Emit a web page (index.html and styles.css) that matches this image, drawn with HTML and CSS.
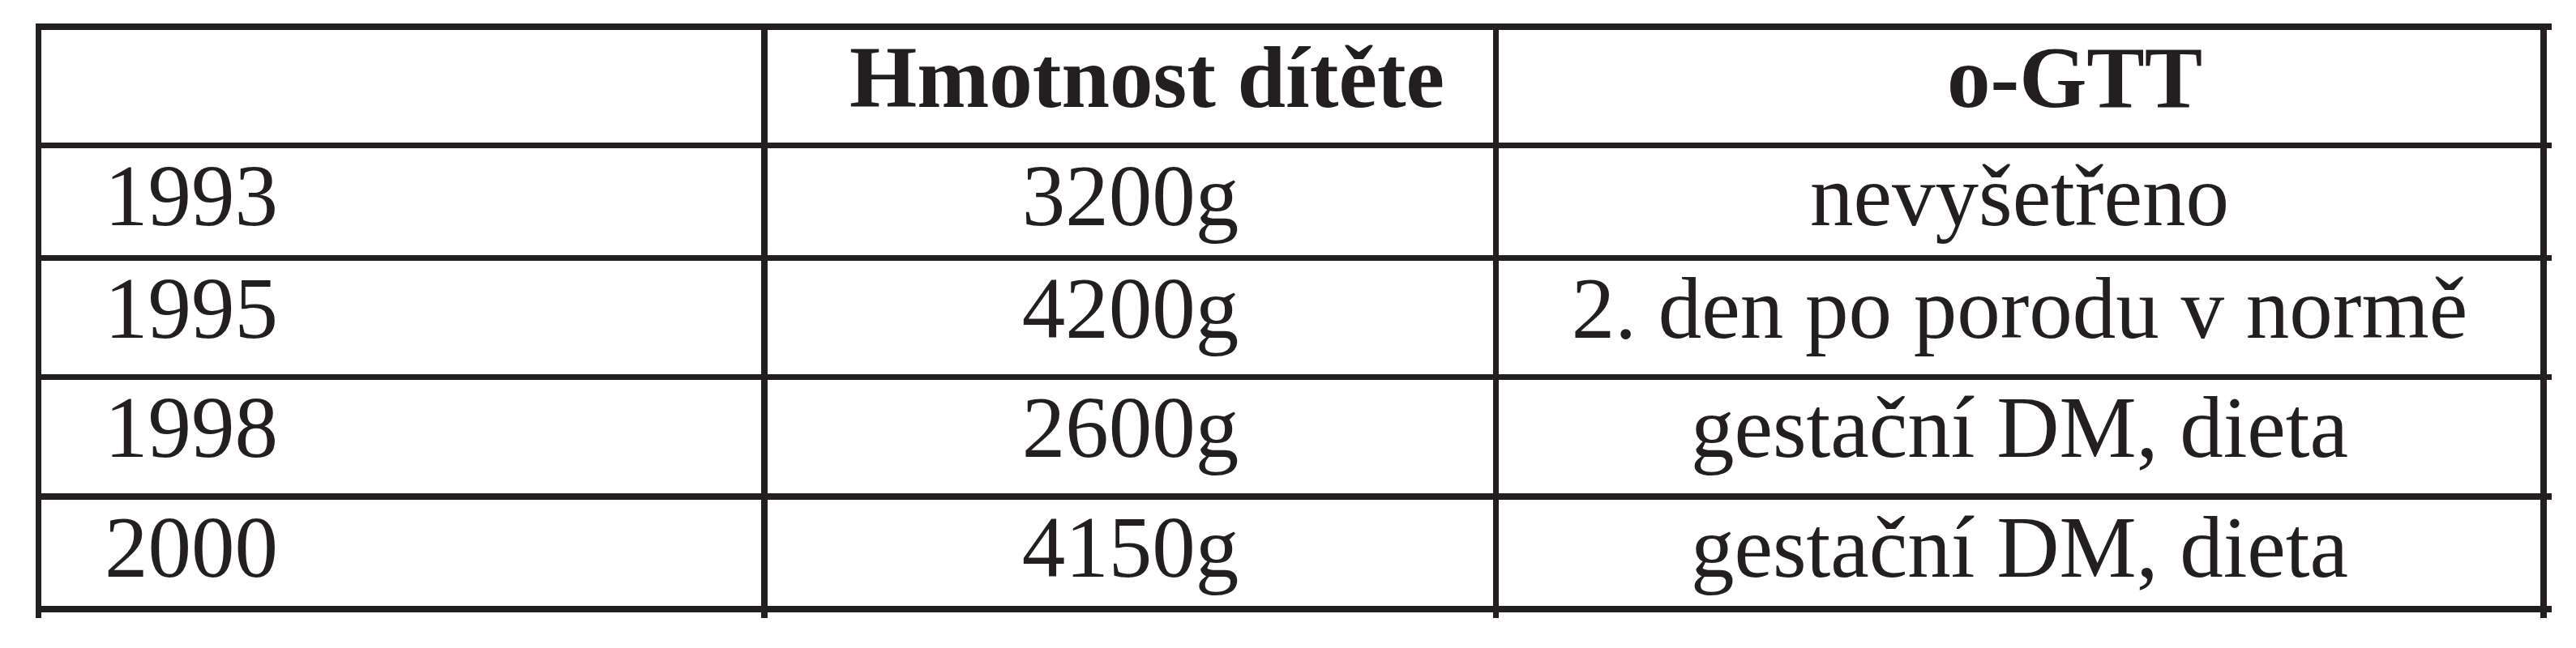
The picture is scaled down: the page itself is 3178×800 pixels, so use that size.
FILE: index.html
```html
<!DOCTYPE html>
<html lang="cs">
<head>
<meta charset="utf-8">
<title>Tabulka</title>
<link rel="stylesheet" href="styles.css">
</head>
<body>
<table class="data">
  <tr class="row-head">
    <td class="c1"></td>
    <th class="c2 head-2">Hmotnost dítěte</th>
    <th class="c3 head-3">o-GTT</th>
    <td class="c4"></td>
  </tr>
  <tr class="row-a">
    <td class="c1 year">1993</td>
    <td class="c2 val">3200g</td>
    <td class="c3 val">nevyšetřeno</td>
    <td class="c4"></td>
  </tr>
  <tr class="row-b">
    <td class="c1 year">1995</td>
    <td class="c2 val">4200g</td>
    <td class="c3 val">2. den po porodu v normě</td>
    <td class="c4"></td>
  </tr>
  <tr class="row-b">
    <td class="c1 year">1998</td>
    <td class="c2 val">2600g</td>
    <td class="c3 val">gestační DM, dieta</td>
    <td class="c4"></td>
  </tr>
  <tr class="row-last">
    <td class="c1 year">2000</td>
    <td class="c2 val">4150g</td>
    <td class="c3 val">gestační DM, dieta</td>
    <td class="c4"></td>
  </tr>
  <tr class="row-tail">
    <td class="c1"></td>
    <td class="c2"></td>
    <td class="c3"></td>
    <td class="c4"></td>
  </tr>
</table>
</body>
</html>
```
FILE: styles.css
```css
html, body {
  margin: 0;
  padding: 0;
  background: #ffffff;
}

.data {
  margin: 29px 0 0 44px;
  border-collapse: separate;
  border-spacing: 0;
  table-layout: fixed;
  font-family: "Liberation Serif", "Times New Roman", serif;
  font-size: 107px;
  line-height: 118px;
  color: #231f20;
}

.data td,
.data th {
  padding: 0;
  vertical-align: top;
  white-space: nowrap;
  box-sizing: content-box;
  border-top: 7px solid #231f20;
  font-weight: normal;
}

.data th {
  font-weight: bold;
}

.c1 {
  width: 888px;
  border-left: 7px solid #231f20;
  text-align: left;
}

.c2 {
  width: 895px;
  border-left: 8px solid #231f20;
  text-align: center;
}

.c3 {
  width: 1285px;
  border-left: 7px solid #231f20;
  border-right: 8px solid #231f20;
  text-align: center;
}

.c4 {
  width: 6px;
}

.row-head td,
.row-head th {
  border-top-width: 8px;
  height: 139px;
}

.row-a td {
  height: 132px;
}

.row-b td {
  height: 140px;
}

.row-last td {
  height: 131px;
  border-top-width: 8px;
}

.row-tail td {
  height: 7px;
  border-top-width: 8px;
}

.row-tail .c4 {
  border-top-color: #231f20;
}

.year {
  padding-left: 78px !important;
  width: 810px !important;
}

.head-2 {
  text-align: left;
  padding-left: 101px !important;
  width: 794px !important;
}

.head-3 {
  text-align: left;
  padding-left: 553px !important;
  width: 732px !important;
}
```
